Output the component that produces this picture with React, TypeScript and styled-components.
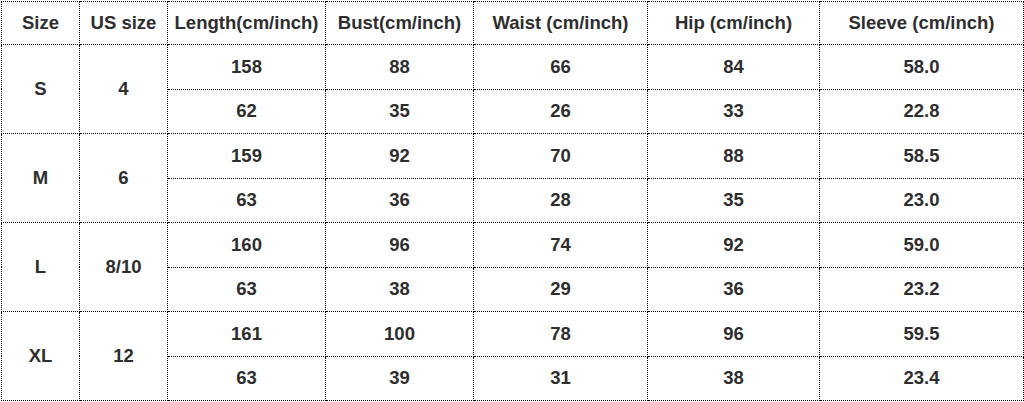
import React from 'react';
import styled, { createGlobalStyle } from 'styled-components';

const GlobalStyle = createGlobalStyle`
  html, body {
    margin: 0;
    padding: 0;
    background: #fff;
  }
`;

const Page = styled.div`
  padding: 1px 0 0 1px;
`;

const Table = styled.table`
  width: 1022px;
  border-collapse: collapse;
  table-layout: fixed;
  font-family: 'Liberation Sans', Arial, sans-serif;
  font-weight: 700;
  font-size: 18.5px;
  color: #2e2e2e;
`;

const Cell = styled.td`
  border: 1px dotted #000;
  text-align: center;
  vertical-align: middle;
  padding: 0;
`;

const HeadCell = styled(Cell).attrs({ as: 'th' })`
  font-weight: 700;
`;

const Row = styled.tr<{ $head?: boolean }>`
  height: ${p => (p.$head ? '43px' : '44.5px')};
`;

const columns = [78, 88, 158, 148, 174, 172, 204];
const headers = [
  'Size',
  'US size',
  'Length(cm/inch)',
  'Bust(cm/inch)',
  'Waist (cm/inch)',
  'Hip (cm/inch)',
  'Sleeve (cm/inch)',
];

type SizeRow = { size: string; us: string; cm: string[]; inch: string[] };

const sizes: SizeRow[] = [
  { size: 'S', us: '4', cm: ['158', '88', '66', '84', '58.0'], inch: ['62', '35', '26', '33', '22.8'] },
  { size: 'M', us: '6', cm: ['159', '92', '70', '88', '58.5'], inch: ['63', '36', '28', '35', '23.0'] },
  { size: 'L', us: '8/10', cm: ['160', '96', '74', '92', '59.0'], inch: ['63', '38', '29', '36', '23.2'] },
  { size: 'XL', us: '12', cm: ['161', '100', '78', '96', '59.5'], inch: ['63', '39', '31', '38', '23.4'] },
];

export default function App() {
  return (
    <>
      <GlobalStyle />
      <Page>
        <Table>
          <colgroup>
            {columns.map((w, i) => (
              <col key={i} style={{ width: w }} />
            ))}
          </colgroup>
          <thead>
            <Row $head>
              {headers.map(h => (
                <HeadCell key={h}>{h}</HeadCell>
              ))}
            </Row>
          </thead>
          <tbody>
            {sizes.map(s => (
              <React.Fragment key={s.size}>
                <Row>
                  <Cell rowSpan={2}>{s.size}</Cell>
                  <Cell rowSpan={2}>{s.us}</Cell>
                  {s.cm.map((v, i) => (
                    <Cell key={i}>{v}</Cell>
                  ))}
                </Row>
                <Row>
                  {s.inch.map((v, i) => (
                    <Cell key={i}>{v}</Cell>
                  ))}
                </Row>
              </React.Fragment>
            ))}
          </tbody>
        </Table>
      </Page>
    </>
  );
}
